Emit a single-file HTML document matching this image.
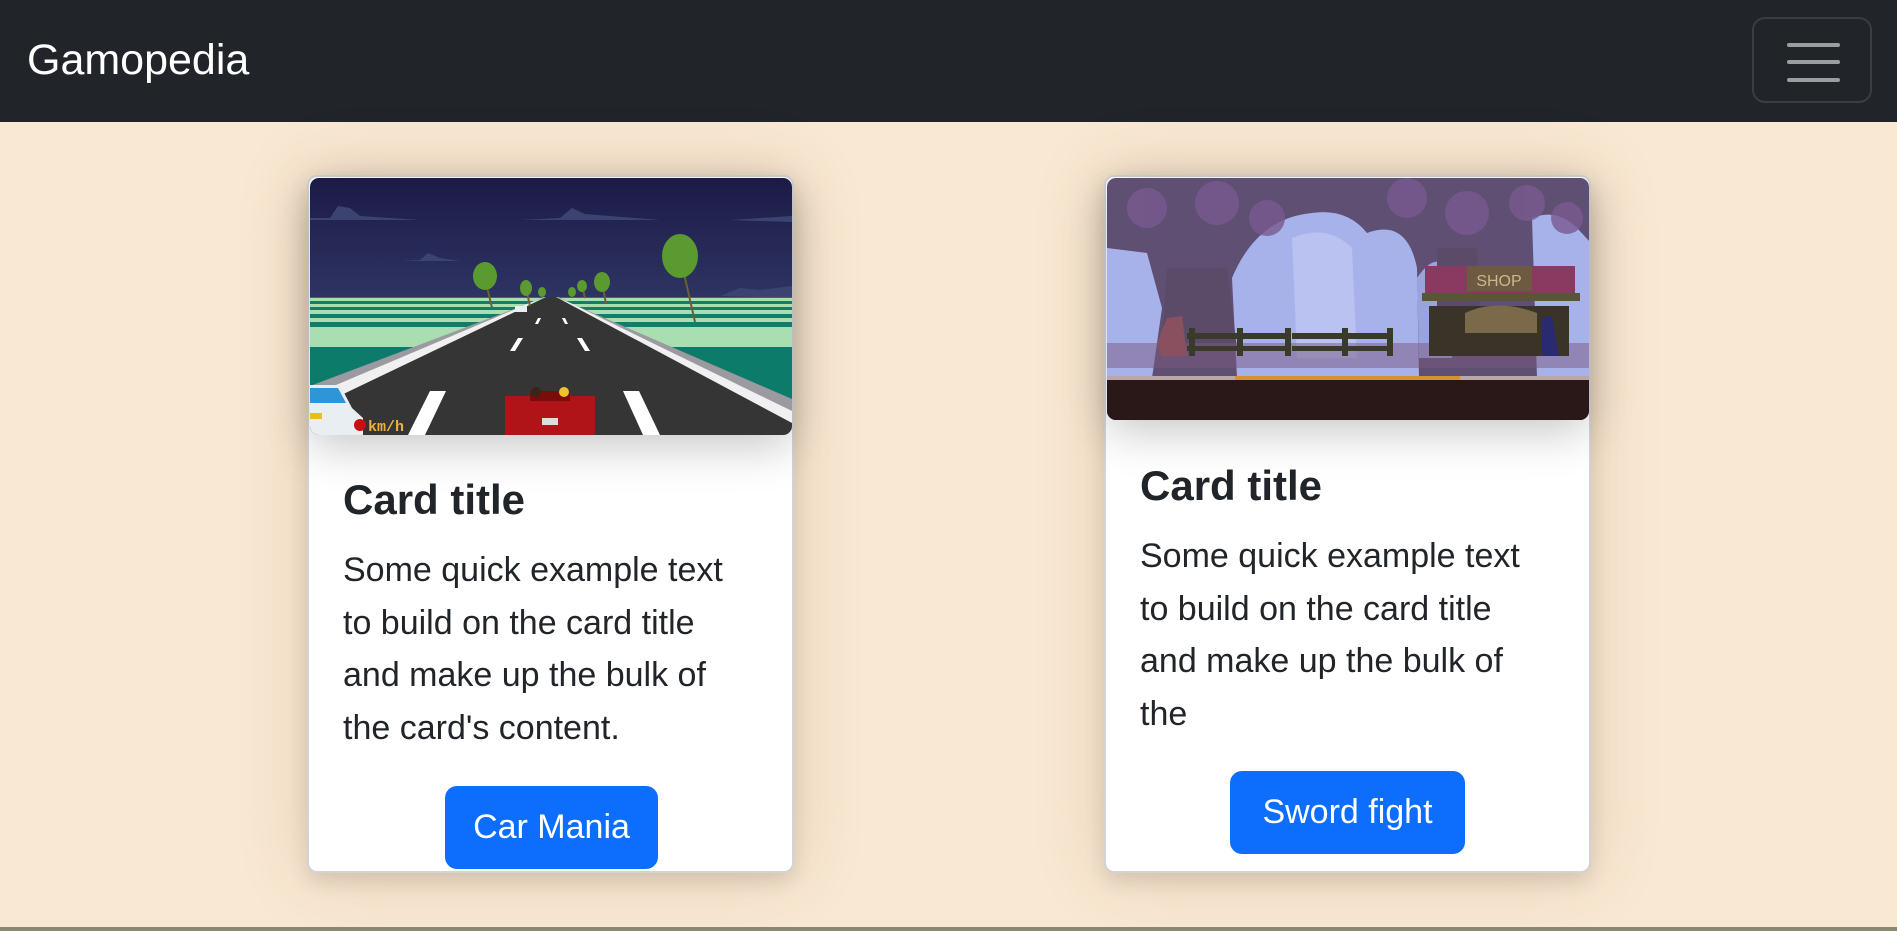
<!DOCTYPE html>
<html><head><meta charset="utf-8"><style>
*{box-sizing:border-box;margin:0;padding:0}
body{width:1897px;height:931px;overflow:hidden;background:#f9e8d2;font-family:"Liberation Sans",sans-serif;color:#212529;position:relative}
.nav{position:absolute;left:0;top:0;width:1897px;height:122px;background:#212529}
.brand{position:absolute;left:27px;top:35px;font-size:43px;color:#fff;line-height:50px}
.tog{position:absolute;left:1752px;top:17px;width:120px;height:86px;border:2px solid #3a3e44;border-radius:13px}
.tog i{position:absolute;left:33px;width:53px;height:4px;border-radius:2px;background:#9c9d9f}
.card{position:absolute;top:175px;width:487px;height:698px;background:#fff;border:2px solid #d3d3d3;border-radius:10px;box-shadow:0 0 70px rgba(120,90,50,.18),0 8px 20px rgba(0,0,0,.12)}
.img{position:absolute;left:1px;top:1px;width:482px;border-radius:9px;overflow:hidden;box-shadow:0 12px 45px rgba(0,0,0,.22);z-index:2}
.img svg{display:block}
.t{position:absolute;left:34px;font-size:42px;font-weight:bold;line-height:50px;white-space:nowrap}
.p{position:absolute;left:34px;font-size:34px;line-height:52.5px;white-space:nowrap}
.btn{position:absolute;height:83px;background:#0d6efd;color:#fff;border-radius:12px;font-size:34px;line-height:83px;text-align:center}
.bottom{position:absolute;left:0;top:927px;width:1897px;height:4px;background:#8a8772}
</style></head><body>
<div class="nav"><div class="brand">Gamopedia</div>
<div class="tog"><i style="top:24px"></i><i style="top:41px"></i><i style="top:59px"></i></div></div>

<div class="card" style="left:307px">
<div class="img"><svg width="482" height="257" viewBox="0 0 482 257">
<defs><linearGradient id="sk" x1="0" y1="0" x2="0" y2="1"><stop offset="0" stop-color="#1c1a47"/><stop offset="1" stop-color="#2e3462"/></linearGradient></defs>
<rect width="482" height="120" fill="url(#sk)"/>
<path d="M0 40 L20 40 L28 28 L40 30 L50 38 L110 42 L0 42Z" fill="#3b4470"/>
<path d="M210 42 L250 40 L262 30 L275 36 L350 42Z" fill="#3b4470"/>
<path d="M90 83 L110 82 L118 75 L130 80 L150 83Z" fill="#3b4470"/>
<path d="M420 42 L482 38 L482 44Z" fill="#3b4470"/>
<path d="M410 118 L430 110 L450 112 L482 108 L482 120Z" fill="#3b4470"/>
<rect y="119" width="482" height="50" fill="#127d6c"/>
<rect y="120" width="482" height="3" fill="#a8deb0"/>
<rect y="126" width="482" height="3" fill="#a8deb0"/>
<rect y="132" width="482" height="4" fill="#a8deb0"/>
<rect y="140" width="482" height="4" fill="#a8deb0"/>
<rect y="149" width="482" height="20" fill="#a8deb0"/>
<rect y="169" width="482" height="88" fill="#0c7b6a"/>
<path d="M234 119 L248 119 L482 230 L482 257 L0 257 L0 215Z" fill="#f0f0f0"/>
<path d="M236 119 L246 119 L482 245 L482 257 L0 257 L0 232Z" fill="#353535"/>
<path d="M236 119 L246 119 L482 221 L482 233 L248 119 L234 119 L0 218 L0 208Z" fill="#9a9aa0"/>
<g fill="#fff"><path d="M208 160 L213 160 L205 173 L200 173Z"/><path d="M267 160 L272 160 L280 173 L275 173Z"/><path d="M120 213 L136 213 L115 257 L98 257Z"/><path d="M313 213 L329 213 L350 257 L333 257Z"/><path d="M228 140 L231 140 L228 146 L225 146Z"/><path d="M252 140 L255 140 L258 146 L255 146Z"/></g>
<path d="M195 218 L285 218 L285 257 L195 257Z" fill="#b01418"/><rect x="220" y="213" width="40" height="10" fill="#7a0c0c"/><circle cx="226" cy="214" r="5" fill="#3a2418"/><circle cx="254" cy="214" r="5" fill="#f0c030"/><rect x="232" y="240" width="16" height="7" fill="#ddd"/>
<path d="M0 207 L30 207 L42 230 L53 240 L53 257 L0 257Z" fill="#e8eef2"/><path d="M0 210 L28 210 L36 225 L0 225Z" fill="#2e96d8"/><rect x="0" y="235" width="12" height="6" fill="#e8c010"/>
<circle cx="50" cy="247" r="6" fill="#c81010"/><text x="58" y="253" font-family="Liberation Mono" font-size="15" font-weight="bold" fill="#f0b040">km/h</text>
<g stroke="#6a6030" stroke-width="2"><line x1="182" y1="130" x2="175" y2="100"/><line x1="385" y1="144" x2="370" y2="78"/><line x1="220" y1="128" x2="216" y2="110"/><line x1="296" y1="126" x2="292" y2="104"/><line x1="275" y1="120" x2="272" y2="108"/></g>
<g fill="#5a9a30"><ellipse cx="175" cy="98" rx="12" ry="14"/><ellipse cx="370" cy="78" rx="18" ry="22"/><ellipse cx="216" cy="110" rx="6" ry="8"/><ellipse cx="292" cy="104" rx="8" ry="10"/><ellipse cx="272" cy="108" rx="5" ry="6"/><ellipse cx="232" cy="114" rx="4" ry="5"/><ellipse cx="262" cy="114" rx="4" ry="5"/></g>
<rect x="205" y="128" width="12" height="6" fill="#e8eef4"/>
</svg></div>
<div class="t" style="top:298px">Card title</div>
<div class="p" style="top:367px">Some quick example text<br>to build on the card title<br>and make up the bulk of<br>the card's content.</div>
<a class="btn" style="left:136px;top:609px;width:213px">Car Mania</a>
</div>

<div class="card" style="left:1104px">
<div class="img" style="left:1px"><svg width="484" height="242" viewBox="0 0 484 242">
<rect width="484" height="242" fill="#5f4f72"/>
<path d="M125 100 Q150 40 205 35 Q240 30 260 55 Q300 40 310 90 L312 200 L130 200Z" fill="#a7b1ea"/>
<path d="M0 70 L40 75 L55 130 L45 200 L0 200Z" fill="#a7b1ea"/>
<path d="M425 40 Q450 30 470 50 L484 65 L484 200 L430 200Z" fill="#a7b1ea"/>
<path d="M185 60 Q220 45 245 70 L250 180 L190 180Z" fill="#b9c2f0"/>
<path d="M310 100 Q330 70 345 95 L345 180 L312 180Z" fill="#9aa4dc"/>
<path d="M60 90 L120 90 L130 170 L55 170Z" fill="#5b4a68"/>
<path d="M330 70 L370 70 L375 160 L330 160Z" fill="#5b4a68"/>
<g fill="#7a5a90" opacity=".8"><circle cx="40" cy="30" r="20"/><circle cx="110" cy="25" r="22"/><circle cx="160" cy="40" r="18"/><circle cx="300" cy="20" r="20"/><circle cx="360" cy="35" r="22"/><circle cx="420" cy="25" r="18"/><circle cx="460" cy="40" r="16"/></g>
<rect y="165" width="484" height="25" fill="#7a5a80" opacity=".5"/>
<g fill="#3a3a2a"><rect x="80" y="155" width="100" height="6"/><rect x="80" y="168" width="100" height="5"/><rect x="185" y="155" width="100" height="6"/><rect x="185" y="168" width="100" height="5"/><rect x="82" y="150" width="6" height="28"/><rect x="130" y="150" width="6" height="28"/><rect x="178" y="150" width="6" height="28"/><rect x="235" y="150" width="6" height="28"/><rect x="280" y="150" width="6" height="28"/></g>
<rect x="318" y="88" width="150" height="30" fill="#8a3a60"/>
<rect x="360" y="88" width="65" height="25" fill="#6e5a40"/>
<text x="392" y="108" text-anchor="middle" font-size="16" fill="#c8b890" font-family="Liberation Sans">SHOP</text>
<rect x="322" y="128" width="140" height="50" fill="#3a3428"/>
<path d="M358 135 Q390 120 430 135 L430 155 L358 155Z" fill="#7a6a4a"/>
<rect x="315" y="115" width="158" height="8" fill="#5a5438"/>
<path d="M50 165 L60 140 L75 138 L80 178 L55 178Z" fill="#8a5060"/>
<path d="M435 140 L445 138 L452 178 L435 178Z" fill="#2a2a70"/>
<rect x="0" y="198" width="484" height="4" fill="#b8a8a8"/>
<rect x="128" y="198" width="225" height="4" fill="#d89030"/>
<rect y="202" width="484" height="40" fill="#2a1718"/>
</svg></div>
<div class="t" style="top:284px">Card title</div>
<div class="p" style="top:353px">Some quick example text<br>to build on the card title<br>and make up the bulk of<br>the</div>
<a class="btn" style="left:124px;top:594px;width:235px">Sword fight</a>
</div>
<div class="bottom"></div>
</body></html>
